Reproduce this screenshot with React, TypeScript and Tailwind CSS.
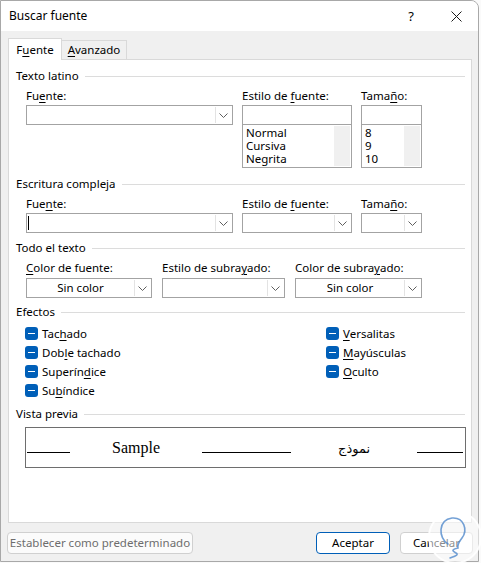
import React from "react";

const U = ({ children }: { children: React.ReactNode }) => (
  <span className="underline decoration-1 underline-offset-[2px]">{children}</span>
);

const Chevron = () => (
  <svg width="9" height="5" viewBox="0 0 9 5" fill="none">
    <path d="M0.5 0.5 L4.5 4.5 L8.5 0.5" stroke="#5f5f5f" strokeWidth="1" />
  </svg>
);

function Section({ title, className = "" }: { title: string; className?: string }) {
  return (
    <div className={`flex h-[14px] items-center pl-[7px] pr-[6px] ${className}`}>
      <span className="leading-none whitespace-nowrap">{title}</span>
      <div className="ml-[6px] h-px flex-1 bg-[#dcdcdc]" />
    </div>
  );
}

function Label({ children }: { children: React.ReactNode }) {
  return <div className="h-[14px] leading-[14px] whitespace-nowrap">{children}</div>;
}

function Combo({ text, caret = false, className = "" }: { text?: string; caret?: boolean; className?: string }) {
  return (
    <div className={`flex h-[20px] border border-[#a3a3a3] bg-white ${className}`}>
      <div className="flex flex-1 items-center justify-center">
        {caret && <div className="mr-auto ml-[1px] h-[14px] w-px bg-black" />}
        {text && <span className="leading-none">{text}</span>}
      </div>
      <div className="my-px mr-px flex w-[16px] items-center justify-center border-l border-[#e3e3e3] bg-white">
        <Chevron />
      </div>
    </div>
  );
}

function ListBox({ items, width }: { items: string[]; width: string }) {
  return (
    <div className={`${width}`}>
      <div className="h-[20px] border border-[#a3a3a3] bg-white" />
      <div className="flex h-[43px] border border-[#a3a3a3] border-t-0 bg-white">
        <div className="flex-1 pl-[3px] pt-[1px]">
          {items.map((i) => (
            <div key={i} className="h-[13px] leading-[13px]">
              {i}
            </div>
          ))}
        </div>
        <div className="my-px mr-px w-[16px] bg-[#f0f0f0]" />
      </div>
    </div>
  );
}

function Check({ children }: { children: React.ReactNode }) {
  return (
    <div className="flex h-[19px] items-center">
      <div className="flex h-[13px] w-[13px] items-center justify-center rounded-[3px] bg-[#005fb8]">
        <div className="h-[1.5px] w-[7px] bg-white" />
      </div>
      <span className="ml-[4px] leading-none whitespace-nowrap">{children}</span>
    </div>
  );
}

export default function App() {
  return (
    <div className="relative h-[563px] w-[481px] bg-[#fafafa] font-['Noto_Sans',sans-serif] text-[11.5px] text-black">
      <div className="flex h-[562px] w-[479px] flex-col overflow-hidden rounded-tr-[8px] border border-[#a8a8a8] bg-[#f0f0f0]">
        {/* Title bar */}
        <div className="flex h-[30px] shrink-0 items-center bg-white">
          <span className="ml-[8px] text-[12px] leading-none">Buscar fuente</span>
          <span className="ml-auto mr-[37px] text-[13px] leading-none">?</span>
          <svg className="mr-[16px]" width="11" height="11" viewBox="0 0 11 11">
            <path d="M0.5 0.5 L10.5 10.5 M10.5 0.5 L0.5 10.5" stroke="#1a1a1a" strokeWidth="1" />
          </svg>
        </div>

        {/* Tabs */}
        <div className="mt-[7px] ml-[7px] flex h-[21px] items-end">
          <div className="relative z-10 -mb-px flex h-[22px] w-[54px] items-center justify-center border border-b-0 border-[#d9d9d9] bg-white">
            <span className="leading-none">
              F<U>u</U>ente
            </span>
          </div>
          <div className="flex h-[19px] w-[65px] items-center justify-center border-t border-r border-[#d9d9d9] bg-[#f0f0f0]">
            <span className="leading-none">
              <U>A</U>vanzado
            </span>
          </div>
        </div>

        {/* Panel */}
        <div className="ml-[7px] flex h-[464px] w-[464px] flex-col border border-[#d9d9d9] bg-white">
          <Section title="Texto latino" className="mt-[9px]" />
          <div className="mt-[6px] flex gap-[9px] pl-[17px]">
            <div className="w-[207px]">
              <Label>
                Fu<U>e</U>nte:
              </Label>
              <Combo className="mt-[2px]" />
            </div>
            <div className="w-[110px]">
              <Label>
                Estilo de <U>f</U>uente:
              </Label>
              <div className="mt-[2px]">
                <ListBox items={["Normal", "Cursiva", "Negrita"]} width="w-[110px]" />
              </div>
            </div>
            <div className="w-[61px]">
              <Label>
                Tama<U>ñ</U>o:
              </Label>
              <div className="mt-[2px]">
                <ListBox items={["8", "9", "10"]} width="w-[61px]" />
              </div>
            </div>
          </div>

          <Section title="Escritura compleja" className="mt-[9px]" />
          <div className="mt-[6px] flex gap-[9px] pl-[17px]">
            <div className="w-[207px]">
              <Label>
                Fue<U>n</U>te:
              </Label>
              <Combo caret className="mt-[2px]" />
            </div>
            <div className="w-[110px]">
              <Label>
                Estilo de <U>f</U>uente:
              </Label>
              <Combo className="mt-[2px]" />
            </div>
            <div className="w-[61px]">
              <Label>
                Tama<U>ñ</U>o:
              </Label>
              <Combo className="mt-[2px]" />
            </div>
          </div>

          <Section title="Todo el texto" className="mt-[8px]" />
          <div className="mt-[6px] flex gap-[10px] pl-[17px]">
            <div className="w-[126px]">
              <Label>
                <U>C</U>olor de fuente:
              </Label>
              <Combo text="Sin color" className="mt-[3px]" />
            </div>
            <div className="w-[123px]">
              <Label>
                Estilo de subra<U>y</U>ado:
              </Label>
              <Combo className="mt-[3px]" />
            </div>
            <div className="w-[127px]">
              <Label>
                Color de subra<U>y</U>ado:
              </Label>
              <Combo text="Sin color" className="mt-[3px]" />
            </div>
          </div>

          <Section title="Efectos" className="mt-[7px]" />
          <div className="mt-[5px] flex pl-[16px]">
            <div className="w-[301px]">
              <Check>
                Tac<U>h</U>ado
              </Check>
              <Check>
                Dob<U>l</U>e tachado
              </Check>
              <Check>
                Superín<U>d</U>ice
              </Check>
              <Check>
                Su<U>b</U>índice
              </Check>
            </div>
            <div>
              <Check>
                <U>V</U>ersalitas
              </Check>
              <Check>
                <U>M</U>ayúsculas
              </Check>
              <Check>
                <U>O</U>culto
              </Check>
            </div>
          </div>

          <Section title="Vista previa" className="mt-[7px]" />
          <div className="mt-[6px] ml-[16px] flex h-[41px] w-[441px] border border-[#6e6e6e]">
            <div className="ml-px h-[25px] w-[43px] border-b border-black" />
            <div className="flex h-[26px] w-[132px] items-end justify-center">
              <span className="mb-[-3px] font-['Liberation_Serif',serif] text-[16px] leading-[18px]">Sample</span>
            </div>
            <div className="h-[25px] w-[89px] border-b border-black" />
            <div className="flex h-[26px] w-[126px] items-end justify-center">
              <span className="mb-[-4px] font-['DejaVu_Sans',sans-serif] text-[13px] leading-[18px]" dir="rtl">
                نموذج
              </span>
            </div>
            <div className="h-[25px] w-[46px] border-b border-black" />
          </div>
        </div>

        {/* Buttons */}
        <div className="mt-[9px] flex h-[22px] pr-[5px] pl-[6px]">
          <div className="flex w-[186px] items-center justify-center rounded-[4px] border border-[#d0d0d0] bg-[#fbfbfb] text-[#6d6d6d]">
            <span className="leading-none whitespace-nowrap">Establecer como predeterminado</span>
          </div>
          <div className="ml-auto flex w-[74px] items-center justify-center rounded-[4px] border border-[#005fb8] bg-white shadow-[inset_0_0_0_1px_#ffffff]">
            <span className="leading-none">Aceptar</span>
          </div>
          <div className="ml-[10px] flex w-[73px] items-center justify-center rounded-[4px] border border-[#d0d0d0] bg-white">
            <span className="leading-none">Cancelar</span>
          </div>
        </div>
      </div>

      {/* Watermark */}
      <svg className="pointer-events-none absolute left-[426px] top-[508px]" width="56" height="55" viewBox="0 0 56 55">
        <circle cx="29" cy="29" r="26" fill="rgba(255,255,255,0.55)" stroke="rgba(255,255,255,0.9)" strokeWidth="2" />
        <path
          d="M22 36 C12 30 12 12 26 10 C38 9 42 22 36 30 C33 34 31 36 32 40 C28 41 24 42 30 45 C34 47 26 49 24 50"
          fill="none"
          stroke="rgba(70,130,200,0.75)"
          strokeWidth="1.6"
          strokeLinecap="round"
        />
      </svg>
    </div>
  );
}
